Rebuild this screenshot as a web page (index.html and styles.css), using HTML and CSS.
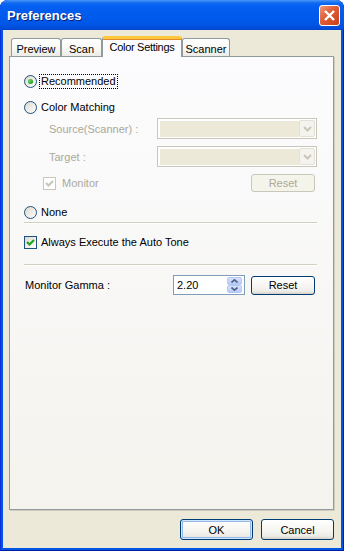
FILE: index.html
```html
<!DOCTYPE html>
<html>
<head>
<meta charset="utf-8">
<link rel="stylesheet" href="styles.css">
</head>
<body>
<div class="window">
  <div class="titlebar">
    <span class="title">Preferences</span>
    <div class="close">
      <svg width="11" height="11" viewBox="0 0 11 11"><path d="M1 1 L10 10 M10 1 L1 10" stroke="#fff" stroke-width="2.4" fill="none"/></svg>
    </div>
  </div>
  <div class="client">
    <div class="tabs">
      <div class="tab tab-preview">Preview</div>
      <div class="tab tab-scan">Scan</div>
      <div class="tab tab-active">Color Settings</div>
      <div class="tab tab-scanner">Scanner</div>
    </div>
    <div class="panel">
      <div class="row row-recommended">
        <span class="radio checked"></span>
        <span class="label focus">Recommended</span>
      </div>
      <div class="row row-matching">
        <span class="radio"></span>
        <span class="label">Color Matching</span>
      </div>
      <div class="field-row row-source">
        <span class="field-label disabled">Source(Scanner) :</span>
        <div class="combo">
          <div class="combo-value"></div>
          <div class="combo-btn"><svg width="9" height="6" viewBox="0 0 9 6"><path d="M1 1 L4.5 4.5 L8 1" stroke="#C9C7BA" stroke-width="2" fill="none"/></svg></div>
        </div>
      </div>
      <div class="field-row row-target">
        <span class="field-label disabled">Target :</span>
        <div class="combo">
          <div class="combo-value"></div>
          <div class="combo-btn"><svg width="9" height="6" viewBox="0 0 9 6"><path d="M1 1 L4.5 4.5 L8 1" stroke="#C9C7BA" stroke-width="2" fill="none"/></svg></div>
        </div>
      </div>
      <div class="monitor-row">
        <span class="check check-disabled"><svg width="11" height="11" viewBox="0 0 11 11"><path d="M2 5 L4.5 7.5 L9 3" stroke="#C9C7BA" stroke-width="2.2" fill="none"/></svg></span>
        <span class="label disabled">Monitor</span>
        <span class="btn btn-disabled btn-reset-small">Reset</span>
      </div>
      <div class="row row-none">
        <span class="radio"></span>
        <span class="label">None</span>
      </div>
      <div class="sep sep-1"></div>
      <div class="row row-auto">
        <span class="check"><svg width="11" height="11" viewBox="0 0 11 11"><path d="M2 5 L4.5 7.5 L9 3" stroke="#21A121" stroke-width="2.2" fill="none"/></svg></span>
        <span class="label">Always Execute the Auto Tone</span>
      </div>
      <div class="sep sep-2"></div>
      <div class="gamma-row">
        <span class="gamma-label">Monitor Gamma :</span>
        <div class="edit">
          <span class="edit-value">2.20</span>
          <div class="spin">
            <div class="spin-btn"><svg width="7" height="4" viewBox="0 0 7 4"><path d="M0.5 3.5 L3.5 0.8 L6.5 3.5" stroke="#4D6185" stroke-width="1.6" fill="none"/></svg></div>
            <div class="spin-btn"><svg width="7" height="4" viewBox="0 0 7 4"><path d="M0.5 0.5 L3.5 3.2 L6.5 0.5" stroke="#4D6185" stroke-width="1.6" fill="none"/></svg></div>
          </div>
        </div>
        <span class="btn btn-reset">Reset</span>
      </div>
    </div>
    <div class="buttons">
      <span class="btn btn-default btn-dialog">OK</span>
      <span class="btn btn-dialog">Cancel</span>
    </div>
  </div>
</div>
</body>
</html>
```
FILE: styles.css
```css
* { box-sizing: border-box; }
html, body { margin: 0; padding: 0; }
body {
  width: 344px;
  height: 551px;
  overflow: hidden;
  background: #ffffff;
  font-family: "Liberation Sans", Arial, sans-serif;
  font-size: 11px;
  color: #000;
}
.window {
  width: 344px;
  height: 551px;
  display: flex;
  flex-direction: column;
  background: #0055E5;
  border-radius: 8px 8px 0 0;
  box-shadow: inset 1px 0 0 #0831D9, inset -1px 0 0 #001EA0, inset 0 -1px 0 #001EA0;
}
.titlebar {
  height: 30px;
  flex: none;
  display: flex;
  align-items: center;
  padding: 0 4px 0 7px;
  border-radius: 8px 8px 0 0;
  background: linear-gradient(#4A95F7 0px, #0F6AF0 3px, #0460F2 6px, #005BEC 16px, #0057E6 24px, #004DDA 28px, #0044CB 30px);
}
.title {
  flex: 1;
  color: #fff;
  font-weight: bold;
  font-size: 13px;
  text-shadow: 1px 1px 0 #0A1E78;
  padding-top: 1px;
}
.close {
  width: 21px;
  height: 21px;
  border: 1px solid #fff;
  border-radius: 3px;
  background: linear-gradient(135deg, #EB9A78 0%, #E0603A 40%, #C93F16 100%);
  display: flex;
  align-items: center;
  justify-content: center;
}
.client {
  flex: 1;
  margin: 0 3px 3px 3px;
  background: #ECE9D8;
  padding: 6px 7px 0 6px;
  display: flex;
  flex-direction: column;
}
.tabs {
  display: flex;
  align-items: flex-end;
  height: 20px;
  padding-left: 2px;
  position: relative;
  z-index: 1;
}
.tab {
  height: 18px;
  border: 1px solid #919B9C;
  border-bottom: none;
  border-radius: 3px 3px 0 0;
  background: linear-gradient(#FFFFFF, #F7F7F4 60%, #ECEBE6);
  text-align: center;
  padding-top: 4px;
  line-height: 12px;
  white-space: nowrap;
}
.tab-preview { width: 50px; }
.tab-scan { width: 41px; }
.tab-scanner { width: 48px; }
.tab-active {
  width: 80px;
  height: 21px;
  margin-bottom: -1px;
  border-top: 3px solid #FFC83C;
  box-shadow: inset 0 1px 0 #E68B2C;
  background: #FCFCFE;
  padding-top: 2px;
  letter-spacing: -0.3px;
}
.panel {
  height: 454px;
  flex: none;
  border: 1px solid #919B9C;
  background: linear-gradient(#FCFCFE, #F4F3EE);
  box-shadow: 1px 1px 0 #D0CDBF;
  padding: 16px 16px 0 14px;
  display: flex;
  flex-direction: column;
}
.row {
  display: flex;
  align-items: center;
  height: 16px;
}
.row-matching { margin-top: 10px; }
.row-none { margin-top: 12px; }
.row-auto { margin-top: 10px; }
.radio {
  width: 13px;
  height: 13px;
  flex: none;
  border-radius: 50%;
  border: 1px solid #1C5180;
  background: linear-gradient(135deg, #DCD9CB, #FFFFFF);
  display: flex;
  align-items: center;
  justify-content: center;
  margin-right: 3px;
}
.radio.checked::after {
  content: "";
  width: 5px;
  height: 5px;
  border-radius: 50%;
  background: radial-gradient(circle at 35% 35%, #6FD36F, #21A121 70%);
}
.label {
  line-height: 13px;
  padding: 0 1px;
  border: 1px solid transparent;
  white-space: nowrap;
  margin-left: -1px;
}
.label.focus { border: 1px dotted #000; }
.disabled { color: #ACA899; }
.field-row {
  display: flex;
  align-items: center;
  height: 21px;
  padding-left: 25px;
}
.row-source { margin-top: 3px; }
.row-target { margin-top: 7px; }
.field-label { width: 108px; white-space: nowrap; }
.combo {
  width: 160px;
  height: 21px;
  border: 1px solid #C9C7BA;
  display: flex;
  padding: 1px;
  background: #fff;
}
.combo-value {
  flex: 1;
  background: #ECE9D8;
  box-shadow: inset 1px 1px 0 #fff;
}
.combo-btn {
  width: 16px;
  border: 1px solid #E3E1D6;
  border-radius: 2px;
  background: #F4F3EE;
  display: flex;
  align-items: center;
  justify-content: center;
}
.monitor-row {
  display: flex;
  align-items: center;
  height: 18px;
  margin-top: 7px;
  padding-left: 19px;
  padding-right: 2px;
}
.monitor-row .label { margin-left: 1px; }
.check {
  width: 13px;
  height: 13px;
  flex: none;
  border: 1px solid #1C5180;
  background: linear-gradient(135deg, #DCD9CB, #FFFFFF);
  display: flex;
  margin-right: 3px;
}
.check-disabled {
  border-color: #CAC8BB;
  background: #FFFFFF;
}
.btn {
  display: flex;
  align-items: center;
  justify-content: center;
  border: 1px solid #003C74;
  border-radius: 3px;
  background: linear-gradient(#FFFFFF 0%, #F5F4F0 60%, #ECEBE6 85%, #D6D0C5 100%);
  white-space: nowrap;
}
.btn-disabled {
  border-color: #C9C7BA;
  background: #F5F4EA;
  color: #ACA899;
}
.btn-reset-small {
  margin-left: auto;
  width: 64px;
  height: 18px;
}
.sep {
  height: 2px;
  border-top: 1px solid #D0D0BF;
  border-bottom: 1px solid #FFFFFF;
}
.sep-1 { margin-top: 2px; }
.sep-2 { margin-top: 14px; }
.gamma-row {
  display: flex;
  align-items: center;
  height: 20px;
  margin-top: 9px;
  padding-right: 2px;
}
.gamma-label { flex: 1; padding-left: 1px; }
.edit {
  width: 72px;
  height: 20px;
  border: 1px solid #7F9DB9;
  background: #fff;
  display: flex;
  align-items: center;
  padding: 1px 2px 1px 2px;
  margin-right: 6px;
}
.edit-value { flex: 1; padding-left: 1px; }
.spin {
  width: 15px;
  height: 16px;
  display: flex;
  flex-direction: column;
}
.spin-btn {
  flex: 1;
  border: 1px solid #B6C9F4;
  border-radius: 2px;
  background: linear-gradient(#D6E1FC, #B8CBF7);
  display: flex;
  align-items: center;
  justify-content: center;
}
.btn-reset {
  width: 64px;
  height: 19px;
}
.buttons {
  display: flex;
  justify-content: flex-end;
  gap: 8px;
  margin-top: 9px;
}
.btn-dialog {
  width: 73px;
  height: 21px;
}
.btn-default {
  box-shadow: inset 0 0 0 1px #CEE7FF, inset 0 0 0 2px #98B8EA;
}
```
